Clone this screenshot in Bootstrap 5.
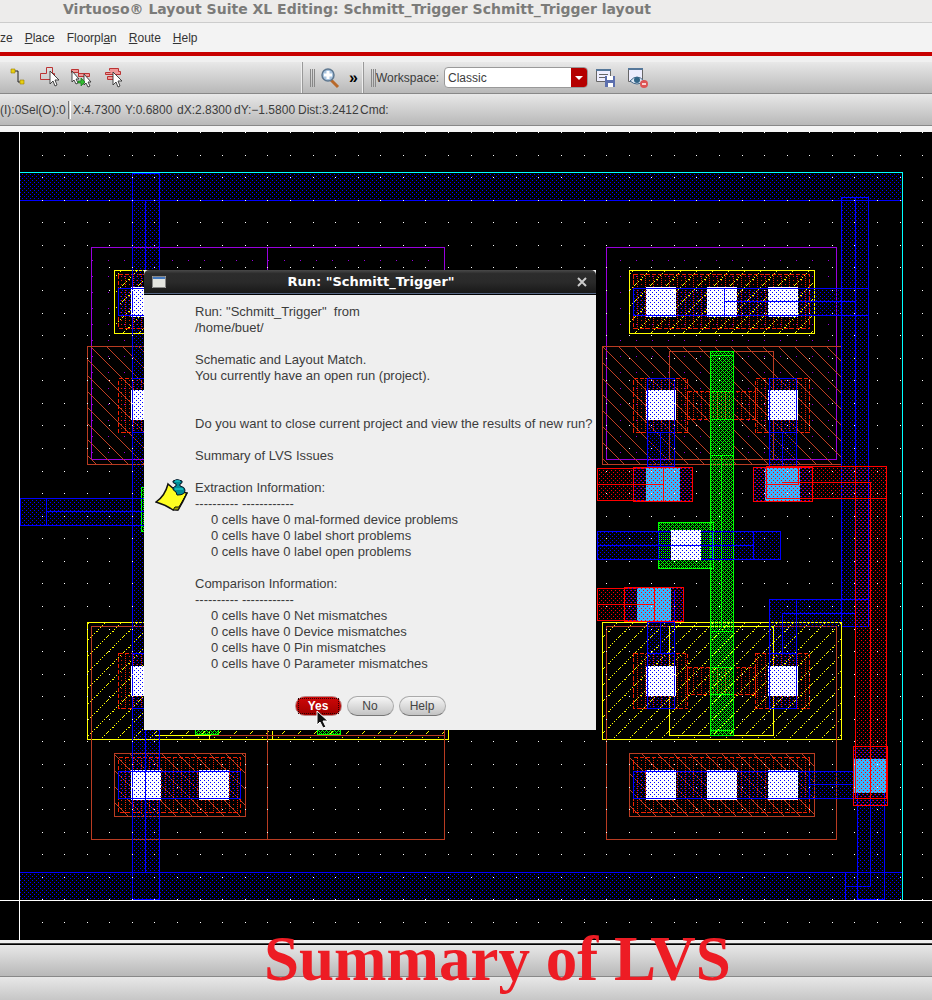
<!DOCTYPE html>
<html lang="en">
<head>
<meta charset="utf-8">
<meta name="viewport" content="width=device-width, initial-scale=1">
<title>Virtuoso Layout Suite XL</title>
<link href="https://cdn.jsdelivr.net/npm/bootstrap@5.3.0/dist/css/bootstrap.min.css" rel="stylesheet">
<style>
body{font:12px/16px "Liberation Sans",Arial,sans-serif;color:#3c3c3c;background:#f0f0f0;overflow-x:hidden}
.titlebar{height:23px;padding-left:63px;background:#edeceb;border-bottom:1px solid #ccc;font:bold 14px/19px "DejaVu Sans",sans-serif;color:#7b7b79}
.menubar{height:29px;background:#f3f3f3;gap:12px}
.menubar a{color:#333;text-decoration:none}
.redline{height:4px;background:#c80000}
.grad{background:linear-gradient(#e8e8e8,#b8b8b8)}
.tools{height:32px;margin-top:6px;border-bottom:1px solid #888}
.toolgroup{height:31px;border-right:1px solid #eee;box-shadow:1px 0 #999}
.tg-edit{width:302px}.tg-zoom{width:61px}.ws-label{width:68px}
.grip{width:5px;height:18px;border:solid #888;border-width:0 1px;background:linear-gradient(90deg,transparent 1px,#888 1px,#888 2px,transparent 2px)}
.status{height:32px;border-bottom:1px solid #888}
.divline{width:3px;height:18px;margin-right:2px;border-left:1px solid #777;border-right:1px solid #fff}
.c52{width:52px}.c57{width:57px}.c64{width:64px}.c62{width:62px}.c47{width:47px}.c21{width:21px}
.spacer{height:6px;background:#f4f4f4}
.workspace{position:relative;width:144px;height:21px;border:1px solid #999;border-radius:4px;background:#fff;overflow:hidden}
.workspace select{width:100%;height:100%;border:0;background:transparent;appearance:none;padding:0 3px;font:inherit;color:#3c3c3c;outline:0}
.workspace svg{position:absolute;right:0;top:0;pointer-events:none}
.board{background:#000}
.board>svg{display:block;width:100%;height:auto}
.dlg{position:absolute;left:144px;top:138px;width:452px;background:#efefef}
.dlgtitle{height:25px;background:linear-gradient(#4a4a4a,#2c2c2c 15%,#2a2a2a 50%,#171717);border-bottom:1px solid #000;box-shadow:inset 0 -1px #566785;border-radius:5px 5px 0 0;color:#fff;font:bold 13px/24px "DejaVu Sans",sans-serif}
.dlgbody{padding:9px 0 24px}
.dlgicon{width:51px;padding:18px 0 0 11px}
.msg{font-size:13px}
.msg p{margin:0;min-height:16px;white-space:pre}
.msg .sub{padding-left:16px}
.actions{gap:5px;padding-bottom:14px}
.pill{width:47px;height:20px;padding:0;border:1px solid #aaa;border-bottom-color:#777;border-radius:10px;background:linear-gradient(#f6f6f6,#c3c3c3);font:12px/16px "Liberation Sans",Arial,sans-serif;color:#444}
.pill.yes{background:linear-gradient(#cf0808,#a00000);color:#fff;font-weight:bold;border-color:#b88}
.pill.yes span{display:block;margin:0 2px;outline:1px dotted #300;outline-offset:-1px}
.pointer{position:absolute;left:172px;top:440px}
.lower{position:relative}
.gap1{height:5px;background:linear-gradient(#eee 3px,#444 3px,#444 4px,#000 4px)}
.bar1{height:32px;border-bottom:1px solid #888}
.bar2{height:23px;background:linear-gradient(#e8e8e8,#c6c6c6)}
.caption{position:absolute;left:264px;top:-13px;white-space:nowrap;font:bold 63px/64px "Liberation Serif","Times New Roman",serif;color:#ed1c24}
</style>
</head>
<body>
<header>
<div class="titlebar text-nowrap">Virtuoso® Layout Suite XL Editing: Schmitt_Trigger Schmitt_Trigger layout</div>
<nav class="menubar d-flex align-items-center"><a href="#">ze</a><a href="#"><u>P</u>lace</a><a href="#">Floorpl<u>a</u>n</a><a href="#"><u>R</u>oute</a><a href="#"><u>H</u>elp</a></nav>
<div class="redline"></div>
<div class="tools grad d-flex">
<div class="toolgroup tg-edit d-flex align-items-center">
<svg width="130" height="31" viewBox="0 0 130 31"><path d="M13 9h5v11h4" fill="none" stroke="#222"/><path d="M11 7h4v4h-4zM20 18h4v4h-4z" fill="#e8cf10" stroke="#997c00" stroke-width=".6"/>
<path d="M40.5 11.500h6v-6h6v6h2v6h-14z" fill="none" stroke="#b33"/><path d="M71.500 7.500h7v4h11v3h-11v-4h-7z" fill="#e99" stroke="#b33"/><path d="M109.500 8.500v-2h9v3h2v3h-15v-2h5m-3 4h8v3h-8z" fill="#e99" stroke="#b33"/>
<g fill="#fff" stroke="#333" stroke-width=".9"><path d="M50 9v13l3-3 2 5 2-1-2-5h4z"/><path d="M72 9v11l2-2 2 4 2-1-2-4h3z"/><path d="M84 12v11l2-2 2 4 2-1-2-4h3z"/><path d="M113 10v13l3-3 2 5 2-1-2-5h4z"/></g><path d="M78 19h3v-3l4 4-4 4v-3h-3z" fill="#3b3" stroke="#171" stroke-width=".7"/></svg></div>
<div class="toolgroup tg-zoom d-flex align-items-center ps-2"><span class="grip"></span>
<svg class="ms-1" width="22" height="24" viewBox="0 0 22 24"><path d="M12 14l7 7" stroke="#b8692b" stroke-width="3"/><circle cx="9" cy="9" r="6" fill="#a9c4df" stroke="#5f7890" stroke-width="1.500"/><path d="M9 5v8M5 9h8" stroke="#fff" stroke-width="3"/></svg>
<b class="ms-2 fs-6 text-black">»</b></div>
<div class="d-flex align-items-center ps-2 text-nowrap"><span class="grip"></span><label class="ws-label" for="ws">Workspace:</label>
<div class="workspace"><select id="ws"><option>Classic</option></select><svg width="16" height="19"><path d="M0 0h16v19H0z" fill="#b50000"/><path d="M4 8h8l-4 4z" fill="#fff"/></svg></div>
<svg class="ms-2" width="54" height="24" viewBox="0 0 54 24"><g fill="#eef" stroke="#666"><path d="M.5 4.500h14v11H.5zM32.500 3.500h14v12h-14z"/><path d="M3 8.500h9M3 11.500h7"/></g><path d="M0 4h15M32 3h15" stroke="#579" stroke-width="2"/><path d="M9 10h10v11H9z" fill="#5c6fae"/><path d="M11 10h6v4h-6zM12 17h5v4h-5z" fill="#fff"/><path d="M34 15q7-8 14 0-7 6-14 0" fill="#dde8f5" stroke="#468"/><circle cx="41" cy="14" r="3" fill="#368"/><circle cx="48" cy="18" r="4" fill="#d55"/><path d="M46 18h4" stroke="#fff" stroke-width="1.500"/></svg></div>
</div>
<div class="status grad d-flex align-items-center text-nowrap"><span class="c21">(I):0</span><span class="c47">Sel(O):0</span><span class="divline"></span><span class="c52">X:4.7300</span><span class="c52">Y:0.6800</span><span class="c57">dX:2.8300</span><span class="c64">dY:−1.5800</span><span class="c62">Dist:3.2412</span><span>Cmd:</span></div>
<div class="spacer"></div>
</header>
<main class="board position-relative">
<svg id="layout" viewBox="0 132 932 808" shape-rendering="crispEdges" role="img" aria-label="Circuit layout">
<defs>
<pattern id="pb" width="4" height="4" patternUnits="userSpaceOnUse"><path d="M0 0h1v1H0zM2 2h1v1H2z" fill="#00f"/></pattern>
<pattern id="pr" width="4" height="4" patternUnits="userSpaceOnUse"><path d="M1 0h1v1H1zM3 2h1v1H3z" fill="#f00"/></pattern>
<pattern id="pw" width="4" height="4" patternUnits="userSpaceOnUse"><path d="M0 0h4v4H0z" fill="#fff"/><path d="M0 0h1v1H0zM2 2h1v1H2z" fill="#00f"/></pattern>
<pattern id="ps" width="4" height="4" patternUnits="userSpaceOnUse"><path d="M0 0h4v4H0z" fill="#38b6ff"/><path d="M1 0h1v1H1zM3 2h1v1H3z" fill="#f00"/></pattern>
<pattern id="pg" width="4" height="4" patternUnits="userSpaceOnUse"><path d="M0 0h1v1H0zM1 1h1v1H1zM3 1h1v1H3zM2 2h1v1H2zM1 3h1v1H1zM3 3h1v1H3z" fill="#0f0"/></pattern>
<pattern id="pd" width="8" height="4" patternUnits="userSpaceOnUse"><path d="M1 0h1v1H1zM5 0h1v1H5zM5 2h1v1H5z" fill="#f02000"/></pattern>
<pattern id="pp" x="12" y="4" width="16" height="16" patternUnits="userSpaceOnUse"><path d="M0 0h1v1H0z" fill="#90d"/></pattern>
<pattern id="py" x="10" y="14" width="16" height="16" patternUnits="userSpaceOnUse"><path id="yd" fill="#ff0"/></pattern>
<pattern id="po" x="12" y="12" width="16" height="16" patternUnits="userSpaceOnUse"><path id="od" fill="#c04024"/></pattern>
</defs>
</svg>
<section class="dlg" role="dialog" aria-labelledby="dt">
<div class="dlgtitle d-flex align-items-center"><svg class="ms-2" width="14" height="12"><path d="M0 0h14v12H0z" fill="#e4e5e0"/><path d="M1 1h12v2H1z" fill="#4479bf"/><path d="M.5.500h13v11H.5z" fill="none" stroke="#888"/></svg><span id="dt" class="flex-grow-1 text-center">Run: "Schmitt_Trigger"</span><svg class="me-2" width="12" height="12"><path d="M2 2l8 8M10 2l-8 8" stroke="#ccc" stroke-width="2"/></svg></div>
<div class="dlgbody d-flex align-items-center">
<div class="dlgicon flex-shrink-0"><svg width="36" height="36" viewBox="0 0 36 36"><path d="M13 5q8 8 19 9-4 9-9 17-4-1-5 0-7-5-17-8Q10 17 13 5z" fill="#ff2" stroke="#111" stroke-width="1.500"/><path d="M32 14l-9 17-5 0 2-3 4 0z" fill="#aa0" stroke="#111"/><path d="M22 16l-1-3q-4-2-3-4 2-2 3-2V5q-4-1-3-3 4-3 9 0 1 2-2 3v2q5 1 5 4 0 5-7 5z" fill="#008c96" stroke="#012"/><path d="M20 2h5M20 10h8" stroke="#2dd"/></svg></div>
<div class="msg"><p>Run: "Schmitt_Trigger"  from</p><p>/home/buet/</p><p></p><p>Schematic and Layout Match.</p><p>You currently have an open run (project).</p><p></p><p></p><p>Do you want to close current project and view the results of new run?</p><p></p><p>Summary of LVS Issues</p><p></p><p>Extraction Information:</p><p>---------- ------------</p><p class="sub">0 cells have 0 mal-formed device problems</p><p class="sub">0 cells have 0 label short problems</p><p class="sub">0 cells have 0 label open problems</p><p></p><p>Comparison Information:</p><p>---------- ------------</p><p class="sub">0 cells have 0 Net mismatches</p><p class="sub">0 cells have 0 Device mismatches</p><p class="sub">0 cells have 0 Pin mismatches</p><p class="sub">0 cells have 0 Parameter mismatches</p></div>
</div>
<div class="actions d-flex justify-content-center"><button class="pill yes"><span>Yes</span></button><button class="pill">No</button><button class="pill">Help</button></div>
<svg class="pointer" width="14" height="20" viewBox="0 0 14 20"><path d="M1 1v14l3-3 3 6 3-1-3-6h5z" fill="#111" stroke="#fff"/></svg>
</section>
</main>
<footer class="lower"><div class="gap1"></div><div class="bar1 grad"></div><div class="bar2"></div><div class="caption">Summary of LVS</div></footer>
<script>
var svg=document.getElementById('layout'),i,j,d='';
for(i=0;i<16;i+=2)d+='M'+i+' '+(15-i)+'h1v1h-1z';
d+='M1 14h1v1h-1zM7 9h1v1h-1z';document.getElementById('yd').setAttribute('d',d);
for(d='',i=0;i<16;i++)d+='M'+i+' '+i+'h1v1h-1z';document.getElementById('od').setAttribute('d',d);
var B='#00f',R='#f00',G='#0f0',Y='#ff0',O='#b93c22',P='#90d',D='#f02000';
function add(n,a){var e=document.createElementNS('http://www.w3.org/2000/svg',n);for(var k in a)e.setAttribute(k,a[k]);svg.appendChild(e)}
// box: pattern fill (p) and one-pixel outline (c) between two corners, inclusive
function box(x,y,x2,y2,p,c,dash){if(p)add('rect',{x:x,y:y,width:x2-x+1,height:y2-y+1,fill:'url(#'+p+')'});
 if(c)add('rect',{x:x+.5,y:y+.5,width:x2-x,height:y2-y,fill:'none',stroke:c,'stroke-dasharray':dash?'4 2':'none'})}
function line(c){for(var i=1;i<arguments.length;i++){var a=arguments[i];add('rect',{x:a[0],y:a[1],width:a[2]-a[0]+1,height:a[3]-a[1]+1,fill:c})}}
function dbox(x,y,x2,y2){box(x,y,x2,y2,'pd',D,1)}
// metal rails
box(20,173,902,199,'pb');line(B,[20,200,902,200]);
box(20,872,902,899,'pb');line(B,[20,872,902,872]);
box(841,197,868,626,'pb',B);line(B,[855,197,855,613]);
// wells
box(91,247,444,459,'pp',P);line(P,[267,247,267,459]);
box(606,247,836,459,'pp',P);
box(87,346,448,464,'po',O);box(602,346,840,464,'po');line(O,[602,346,840,346],[602,464,840,464],[602,346,602,464]);
box(669,351,773,459,0,O);
box(87,622,448,739,'py',Y);box(602,622,841,739,'py',Y);
box(91,626,444,839,0,O);line(O,[267,626,267,839]);box(606,626,836,839,0,O);
box(669,626,773,735,0,Y);line(Y,[155,735,210,735],[272,731,272,739],[209,731,209,738]);line(O,[211,735,444,735]);
// contact rows
box(114,270,245,333,'py',Y);dbox(118,274,240,328);box(118,288,240,315,'pb',B);
box(629,270,814,333,'py',Y);dbox(633,274,809,328);box(633,288,868,315,'pb',B);
box(114,753,245,816,'po',O);dbox(118,757,240,812);box(118,771,240,798,'pb',B);
box(629,753,814,816,'po',O);dbox(633,757,809,812);box(633,771,855,798,'pb',B);line(B,[809,771,809,798],[809,784,853,784]);
dbox(118,378,172,432);dbox(118,653,172,708);
[633,755].forEach(function(x){dbox(x,378,x+54,432);dbox(x,653,x+54,708);
 box(x+14,378,x+41,466,'pb',B);line(B,[x+14,432,x+41,432],[x+27,432,x+27,466])});
dbox(687,391,755,419);dbox(687,667,755,694);
box(132,173,159,899,'pb',B);line(B,[145,200,145,872]);box(132,378,159,432,0,B);box(132,653,159,708,0,B);
box(647,622,674,708,'pb',B);line(B,[647,653,674,653],[660,622,660,653],[674,590,674,622]);
box(769,599,796,708,'pb',B);line(B,[769,653,796,653],[782,613,782,653],[782,613,855,613]);
box(797,599,868,626,'pb');line(B,[796,599,868,599]);
// gate
box(710,351,733,735,'pg',G);line(G,[721,455,721,626]);
[355,391,419,455,631,667,694,730].forEach(function(y){line(G,[710,y,733,y])});
box(658,522,713,568,'pg',G);box(141,487,150,531,'pg',G);box(195,722,218,734,'pg',G);box(317,722,340,734,'pg',G);
box(597,531,780,559,'pb',B);line(B,[597,545,753,545],[658,531,658,559],[712,531,712,559],[753,531,753,559]);
box(20,498,150,525,'pb',B);line(B,[46,498,46,525],[46,511,150,511]);
// contacts
[[131,287],[646,287],[707,287],[768,287],[131,390],[646,390],[768,390],[131,666],[646,666],[768,666],[131,770],[199,770],[646,770],[707,770],[768,770],[671,530]].forEach(function(c){box(c[0],c[1],c[0]+29,c[1]+29,'pw')});
line(B,[145,770,145,799],[132,287,132,799],[118,288,150,288],[118,315,150,315],[118,798,240,798],[118,771,240,771],[633,288,868,288],[633,315,868,315],[724,288,724,315],[724,301,855,301],[633,771,855,771],[633,798,855,798],[671,545,700,545]);
[647,674,769,796].forEach(function(x){line(B,[x,390,x,420],[x,666,x,696])});
// second metal and vias
box(853,746,887,805,'pb');box(857,792,884,899,'pb',B);line(B,[870,792,870,886],[845,886,870,886],[845,872,845,899]);
box(855,466,886,798,'pr',R);box(812,466,886,498,'pr');
box(597,468,663,500,'pr',R);box(597,588,654,620,'pr',R);
box(633,467,692,501,'pb');box(633,467,692,501,'pr',R);box(646,468,679,500,'ps');
box(753,467,812,501,'pb');box(753,467,812,501,'pr',R);box(765,468,799,500,'ps');
box(624,587,683,621,'pb');box(624,587,683,621,'pr',R);box(637,588,670,620,'ps');
box(853,746,887,805,'pr',R);box(854,759,886,792,'ps');
line(R,[597,484,663,484],[663,467,663,501],[597,604,654,604],[654,587,654,620],[766,466,886,466],[766,498,886,498],[766,466,766,498],[798,467,798,484],[766,484,798,484],[782,482,870,482],[870,482,870,798],[855,746,855,798],[886,746,886,798]);
// cell boundary, axes, grid
line('#0ff',[20,172,902,172],[902,172,902,899]);
line('#fff',[19,132,19,939],[0,900,931,900]);
d='';for(j=0;j<36;j++)for(i=0;i<41;i++)d+='M'+Math.round(19+22.58*i)+' '+Math.round(922-22.57*j)+'h1v1h-1z';
add('path',{d:d,fill:'#fff'});
</script>
<script src="https://cdn.jsdelivr.net/npm/bootstrap@5.3.0/dist/js/bootstrap.bundle.min.js"></script>
</body>
</html>
